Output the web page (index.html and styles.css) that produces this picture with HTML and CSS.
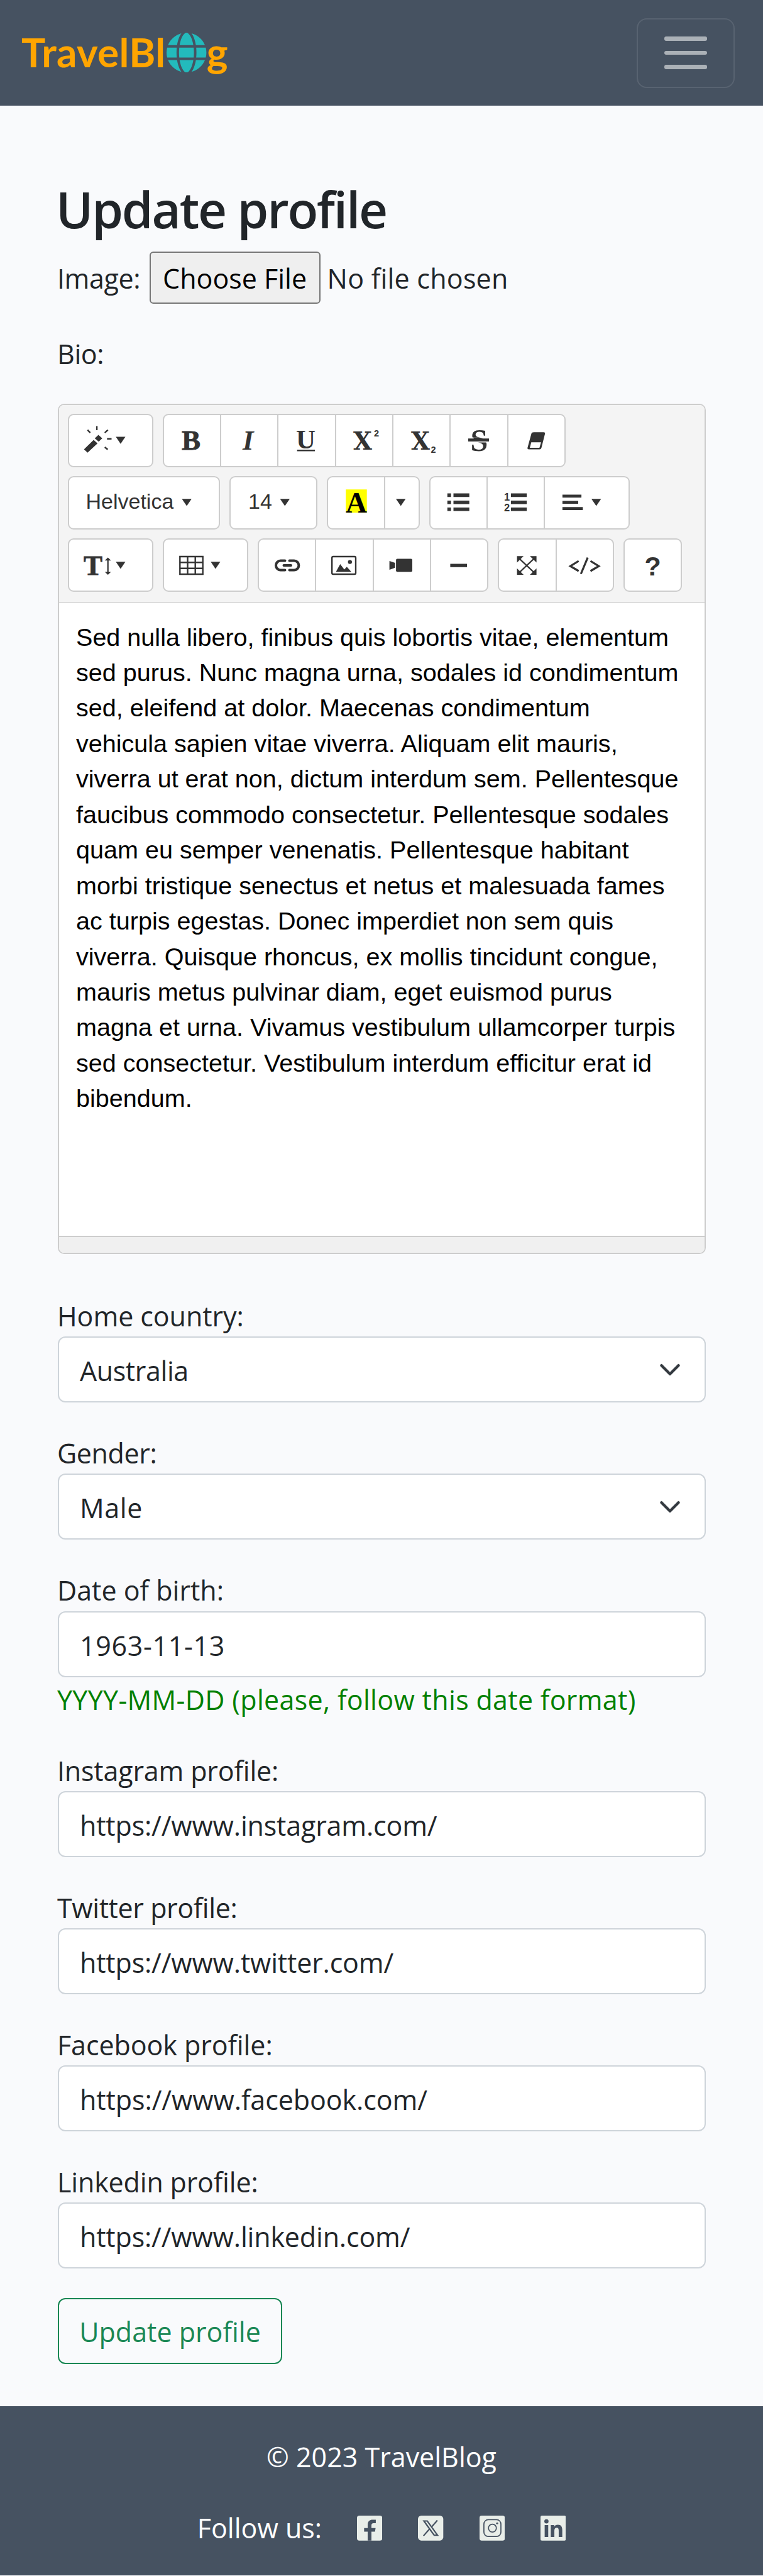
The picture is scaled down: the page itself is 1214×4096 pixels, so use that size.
FILE: index.html
```html
<!DOCTYPE html>
<html lang="en">
<head>
<meta charset="utf-8">
<title>Update profile</title>
<link rel="stylesheet" href="styles.css">
</head>
<body>
<header class="navbar">
  <a class="brand"><span>TravelBl</span><svg class="globe" viewBox="0 0 512 512"><path d="M352 256c0 22.200-1.200 43.600-3.300 64H163.300c-2.200-20.400-3.300-41.800-3.300-64s1.200-43.600 3.300-64H348.700c2.200 20.400 3.300 41.800 3.300 64zm28.800-64H503.900c5.300 20.500 8.100 41.900 8.100 64s-2.800 43.500-8.100 64H380.800c2.100-20.600 3.200-42 3.200-64s-1.100-43.400-3.200-64zm112.600-32H376.700c-10-63.900-29.800-117.400-55.300-151.600c78.300 20.700 142 77.500 171.900 151.600zm-149.100 0H167.700c6.100-36.400 15.500-68.600 27-94.700c10.500-23.600 22.200-40.700 33.500-51.500C239.400 3.200 248.700 0 256 0s16.600 3.200 27.800 13.800c11.300 10.800 23 27.900 33.500 51.500c11.600 26 20.900 58.200 27 94.700zm-209 0H18.600C48.600 85.900 112.200 29.100 190.600 8.400C165.100 42.600 145.300 96.100 135.300 160zM8.100 192H131.200c-2.100 20.600-3.200 42-3.200 64s1.100 43.400 3.200 64H8.100C2.800 299.500 0 278.100 0 256s2.800-43.500 8.100-64zM194.700 446.600c-11.600-26-20.900-58.200-27-94.600H344.300c-6.100 36.400-15.500 68.600-27 94.600c-10.500 23.600-22.200 40.700-33.500 51.500C272.600 508.800 263.300 512 256 512s-16.600-3.200-27.800-13.800c-11.300-10.800-23-27.900-33.500-51.500zM135.300 352c10 63.900 29.800 117.400 55.300 151.600C112.200 482.900 48.600 426.100 18.600 352H135.300zm358.100 0c-30 74.100-93.600 130.900-171.900 151.600c25.500-34.200 45.200-87.700 55.300-151.600H493.400z"/></svg><span>g</span></a>
  <button class="toggler" type="button" aria-label="Menu"><i></i><i></i><i></i></button>
</header>

<main class="page">
  <h1 class="title">Update profile</h1>
  <div class="file-row">
    <span class="tight4">Image:</span>
    <button class="file-button" type="button">Choose File</button>
    <span class="loose2">No file chosen</span>
  </div>
  <div class="label bio-label tight4">Bio:</div>

  <section class="editor">
    <div class="toolbar">
      <div class="tools">
        <div class="group">
          <button class="btn w136"><svg viewBox="0 0 136 84"><path d="M25.600 56.500L31.300 61.800L47.200 47.100L41 41.400zM42.800 38.900L48.600 33.600L54.700 38.900L49 44.200z"/><path class="line" d="M46.100 19.400V26M31.300 25.700l4.300 4.400M63.700 25.700l-5 4.400M62.300 39.800h7.200M58.700 53l4.700 3.800"/><path d="M76.300 36.500h15.200L83.900 47.700z"/></svg></button>
        </div>
        <div class="group">
          <button class="btn w93"><svg viewBox="0 0 93 84"><text class="serif heavy" x="30" y="57">B</text></svg></button>
          <button class="btn w93"><svg viewBox="0 0 93 84"><text class="serif italic" x="36" y="57">I</text></svg></button>
          <button class="btn w93"><svg viewBox="0 0 93 84"><text class="serif" x="30" y="55" font-size="43">U</text><path d="M31.700 57h28.400v2.600H31.700z"/></svg></button>
          <button class="btn w93"><svg viewBox="0 0 93 84"><text class="slab" x="29" y="57">X</text><text class="tiny" x="62" y="36.400">2</text></svg></button>
          <button class="btn w93"><svg viewBox="0 0 93 84"><text class="slab" x="30" y="57">X</text><text class="tiny" x="61.500" y="61.800">2</text></svg></button>
          <button class="btn w93"><svg viewBox="0 0 93 84"><text class="serif" x="33.500" y="58.500" font-size="50">S</text><path fill="#fff" d="M29 37.500h35v8H29z"/><path d="M38 37.500h9l14 4H40zM29.900 39.300H63v4.600H29.900z"/></svg></button>
          <button class="btn w93"><svg viewBox="0 0 93 84"><path fill-rule="evenodd" d="M42.500 29.200H58q2.800 0 2.100 2.600L54.500 54q-.6 2.500-3.200 2.500H34.500q-2.800 0-2.100-2.700L38.500 31.500q.7-2.300 4-2.300zM38.300 45.200L36 53.900H51.300L53.900 45.200z"/></svg></button>
        </div>
      </div>
      <div class="tools">
        <div class="group">
          <button class="btn w242"><svg viewBox="0 0 242 84"><text class="sans" x="28.500" y="52">Helvetica</text><path d="M181.400 36.200h15.400L189.100 47.600z"/></svg></button>
        </div>
        <div class="group">
          <button class="btn w140"><svg viewBox="0 0 140 84"><text class="sans" x="30" y="52">14</text><path d="M80.600 36.200H96L88.300 47.600z"/></svg></button>
        </div>
        <div class="group">
          <button class="btn w93"><svg viewBox="0 0 93 84"><path fill="#ff0" d="M30.200 21.300h33.500v37H30.200z"/><text class="serif black" x="30" y="57.700" font-size="47">A</text></svg></button>
          <button class="btn w56"><svg viewBox="0 0 56 84"><path d="M19 36.200h15.400L26.700 47.600z"/></svg></button>
        </div>
        <div class="group">
          <button class="btn w93"><svg viewBox="0 0 93 84"><path d="M28.800 27.600h5.800v5.600h-5.800zM28.800 38.900h5.800v5.600h-5.800zM28.800 50h5.800v5.600h-5.800zM38.500 27.600h25.200v5.600H38.500zM38.500 38.900h25.200v5.600H38.500zM38.500 50h25.200v5.600H38.500z"/></svg></button>
          <button class="btn w93"><svg viewBox="0 0 93 84"><text class="num" x="28" y="38.900">1</text><text class="num" x="28" y="55.800">2</text><path d="M38.900 27.600h25.200v5.600H38.900zM38.900 38.900h25.200v5.600H38.900zM38.900 50h25.200v5.600H38.900z"/></svg></button>
          <button class="btn w136"><svg viewBox="0 0 136 84"><path d="M29.900 29.500h30.200v4.700H29.900zM29.900 39.500H55V44H29.900zM29.900 49.300h32.400V54H29.900zM76 36.200h15.400L83.700 47.600z"/></svg></button>
        </div>
      </div>
      <div class="tools">
        <div class="group">
          <button class="btn w136"><svg viewBox="0 0 136 84"><text class="serif heavy" x="25" y="58" font-size="45">T</text><path d="M63.700 30.500l5 4.700h-3.900v18h3.900l-5 4.700l-5-4.700h3.900v-18h-3.900zM76.300 37.200h15.200L83.900 48.400z"/></svg></button>
        </div>
        <div class="group">
          <button class="btn w136"><svg viewBox="0 0 136 84"><path class="line" d="M27.300 29h36.400v28H27.300zM39.500 29v28M51.700 29v28M27.300 38.300h36.400M27.300 47.700h36.400"/><path d="M76.300 37.200h15.200L83.900 48.400z"/></svg></button>
        </div>
        <div class="group">
          <button class="btn w93"><svg viewBox="0 0 93 84"><path class="thick" d="M43.500 35.600h-7.100a7.400 7.400 0 0 0 0 14.800h7.100M50.500 35.600h7.500a7.400 7.400 0 0 1 0 14.800h-7.500M41.500 43h11.500"/></svg></button>
          <button class="btn w93"><svg viewBox="0 0 93 84"><rect class="line" x="27.200" y="29" width="37.800" height="28" rx="2"/><circle cx="55.800" cy="37.600" r="3.200"/><path d="M33.500 53.300L40.300 41.100L46.800 49.600L50.800 45.200L58 53.300z"/></svg></button>
          <button class="btn w93"><svg viewBox="0 0 93 84"><rect x="37.100" y="32.600" width="25.900" height="20.700" rx="2"/><path d="M26.600 36.100L35.600 39v7.700l-9 3.200z"/></svg></button>
          <button class="btn w93"><svg viewBox="0 0 93 84"><path d="M32.400 40.500H59v5.300H32.400z"/></svg></button>
        </div>
        <div class="group">
          <button class="btn w93"><svg viewBox="0 0 93 84"><path class="line" d="M33 31l26 24.500M59 31L33 55.500"/><path d="M30.600 28.200h10.500L30.600 38.500zM61.600 28.200H51.100l10.500 10.300zM30.600 58h10.500L30.600 47.700zM61.600 58H51.100l10.500-10.300z"/></svg></button>
          <button class="btn w93"><svg viewBox="0 0 93 84"><path class="line code" d="M36.700 36L23.500 44.200l13.200 7.800M51.100 30.700L40.300 56.500M55.500 36l13.200 8.200L55.500 52"/></svg></button>
        </div>
        <div class="group">
          <button class="btn w93"><svg viewBox="0 0 93 84"><text class="sans bold" x="33.500" y="58.500" font-size="43">?</text></svg></button>
        </div>
      </div>
    </div>
    <div class="editable">Sed nulla libero, finibus quis lobortis vitae, elementum<br>sed purus. Nunc magna urna, sodales id condimentum<br>sed, eleifend at dolor. Maecenas condimentum<br>vehicula sapien vitae viverra. Aliquam elit mauris,<br>viverra ut erat non, dictum interdum sem. Pellentesque<br>faucibus commodo consectetur. Pellentesque sodales<br>quam eu semper venenatis. Pellentesque habitant<br>morbi tristique senectus et netus et malesuada fames<br>ac turpis egestas. Donec imperdiet non sem quis<br>viverra. Quisque rhoncus, ex mollis tincidunt congue,<br>mauris metus pulvinar diam, eget euismod purus<br>magna et urna. Vivamus vestibulum ullamcorper turpis<br>sed consectetur. Vestibulum interdum efficitur erat id<br>bibendum.</div>
    <div class="statusbar"></div>
  </section>

  <div class="field">
    <div class="label tight1">Home country:</div>
    <div class="control"><span class="tight4">Australia</span><svg class="chevron" viewBox="0 0 16 16"><path d="m2 5 6 6 6-6"/></svg></div>
  </div>
  <div class="field">
    <div class="label tight4">Gender:</div>
    <div class="control"><span class="loose6">Male</span><svg class="chevron" viewBox="0 0 16 16"><path d="m2 5 6 6 6-6"/></svg></div>
  </div>
  <div class="field">
    <div class="label">Date of birth:</div>
    <div class="control"><span class="loose6">1963-11-13</span></div>
    <div class="help">YYYY-MM-DD (please, follow this date format)</div>
  </div>
  <div class="field">
    <div class="label tight2">Instagram profile:</div>
    <div class="control"><span class="tight2">https://www.instagram.com/</span></div>
  </div>
  <div class="field">
    <div class="label tight4">Twitter profile:</div>
    <div class="control"><span class="tight2">https://www.twitter.com/</span></div>
  </div>
  <div class="field">
    <div class="label tight1">Facebook profile:</div>
    <div class="control"><span class="tight1">https://www.facebook.com/</span></div>
  </div>
  <div class="field">
    <div class="label tight2">Linkedin profile:</div>
    <div class="control"><span class="tight2">https://www.linkedin.com/</span></div>
  </div>
  <button class="submit" type="submit">Update profile</button>
</main>

<footer class="footer">
  <div class="copy">© 2023 TravelBlog</div>
  <div class="follow"><span>Follow us:</span>
    <div class="social">
      <svg viewBox="0 0 128 126"><rect class="tile" width="128" height="126" rx="12"/><path class="cut" d="M54 126V81H36V63H54V49c0-20 9-28 26-28h15v17H84c-8 0-11 4-11 11v14h21l-3 18H73v45z"/></svg>
      <svg viewBox="0 0 128 126"><rect class="tile" width="128" height="126" rx="17"/><path class="stroke x" d="M98 24L69 57M28 102L60 66"/><path class="stroke x tile" d="M30 27H47L99 99H82z"/></svg>
      <svg viewBox="0 0 128 126"><rect class="tile" width="128" height="126" rx="11"/><rect class="stroke" x="22" y="20.500" width="86" height="85" rx="22"/><circle class="stroke" cx="65" cy="63" r="20"/><circle class="cut" cx="89" cy="39" r="5"/></svg>
      <svg viewBox="0 0 128 126"><rect class="tile" width="128" height="126" rx="7"/><circle class="cut" cx="30" cy="29" r="10.500"/><path class="cut" d="M21 48h18v60H21zM52 48h17v8c4-7 10-10 19-10 16 0 22 10 22 27v35H92V76c0-9-2-15-10-15s-12 6-12 15v32H52z"/></svg>
    </div>
  </div>
</footer>
</body>
</html>
```
FILE: styles.css
```css
* { box-sizing: border-box; }
body { margin: 0; background: #f9fafc; color: #212529; font: 43px/66px "Open Sans", sans-serif; }
button { font: inherit; margin: 0; padding: 0; }
.tight1 { letter-spacing: -.08px; }
.tight2 { letter-spacing: -.17px; }
.tight4 { letter-spacing: -.4px; }
.loose2 { letter-spacing: .23px; }
.loose6 { letter-spacing: .65px; }

.navbar { height: 168px; background: #465261; display: flex; justify-content: space-between; align-items: center; padding: 0 45px 0 34px; }
.brand { display: flex; align-items: center; font: 700 64px/78px Lato, sans-serif; letter-spacing: .3px; color: #ffa500; margin-top: -3px; }
.globe { width: 63.400px; height: 63.400px; margin: 2px 0 0 2px; fill: #23babc; }
.toggler { width: 156px; height: 111px; border: 2px solid rgba(255,255,255,.1); border-radius: 16px; background: none; display: flex; flex-direction: column; align-items: center; justify-content: center; gap: 16px; }
.toggler i { width: 68px; height: 6.500px; border-radius: 3px; background: rgba(255,255,255,.55); }

.page { padding: 113px 91px 0 92px; }
.title { margin: 0 0 18px -3px; padding-top: 1px; font-size: 80px; line-height: 100px; font-weight: 600; letter-spacing: -2.200px; white-space: nowrap; }
.file-row { display: flex; align-items: center; height: 83px; margin-left: -1px; white-space: nowrap; }
.file-row span { padding-top: 2px; }
.file-button { height: 83px; width: 272px; border: 2px solid #767676; border-radius: 6px; background: #efefef; color: #000; margin: 0 11px 0 14.500px; padding-top: 2px; }
.label { height: 66.600px; padding-top: 1.400px; margin-left: -1px; white-space: nowrap; }
.bio-label { margin: 46px 0 46px -1px; }

.editor { height: 1352px; border: 2px solid #cdcdcd; border-radius: 10px; overflow: hidden; background: #fff; display: flex; flex-direction: column; }
.toolbar { height: 315px; background: #f4f4f4; border-bottom: 2px solid #ddd; padding: 14px 0 0 13.500px; display: flex; flex-direction: column; gap: 14px; }
.tools { display: flex; gap: 15px; height: 85px; }
.group { display: flex; }
.btn { height: 85px; border: 2px solid #cdcdcd; background: #fff; margin-left: -2px; color: #333; }
.btn:first-child { margin-left: 0; border-radius: 9px 0 0 9px; }
.btn:last-child { border-radius: 0 9px 9px 0; }
.btn:only-child { border-radius: 9px; }
.btn svg { display: block; height: 84px; margin: -2px; fill: #333; }
.w93 { width: 93.300px; }
.w93 svg { width: 93px; }
.w136 { width: 136.300px; }
.w136 svg { width: 136px; }
.w242 { width: 242px; }
.w242 svg { width: 242px; }
.w140 { width: 140.500px; }
.w140 svg { width: 140px; }
.w56 { width: 56.500px; }
.w56 svg { width: 56px; }
.serif { font-family: "Liberation Serif", serif; font-weight: 700; }
text.serif:not([font-size]) { font-size: 45px; }
.heavy { stroke: #333; stroke-width: .8px; }
.italic { font-style: italic; }
.black { fill: #000; }
.slab { font: 700 38.500px "DejaVu Serif", serif; }
.tiny { font: 700 14.500px "Liberation Sans", sans-serif; }
.num { font: 700 16.500px "Liberation Sans", sans-serif; }
.sans { font-family: "Liberation Sans", sans-serif; }
text.sans:not([font-size]) { font-size: 34px; }
.bold { font-weight: 700; }
.line { fill: none; stroke: #333; stroke-width: 2.400px; }
.code { stroke-width: 3.200px; }
.thick { fill: none; stroke: #333; stroke-width: 4px; stroke-linecap: round; }
.editable { flex: 1; font: 39.550px/56.430px "Liberation Sans", sans-serif; color: #000; padding: 26px 0 0 27px; white-space: nowrap; }
.statusbar { height: 27px; background: #f0f0f0; border-top: 2px solid #cdcdcd; }

.field { margin-bottom: 46.600px; }
.editor + .field { margin-top: 65px; }
.control { height: 105px; border: 2px solid #ced4da; border-radius: 12px; background: #fff; padding: 5px 37px 0 33px; display: flex; align-items: center; justify-content: space-between; }
.chevron { width: 36px; height: 36px; margin-top: -5px; fill: none; stroke: #343a40; stroke-width: 2px; stroke-linecap: round; stroke-linejoin: round; }
.help { color: #008000; padding-top: 3px; height: 68px; letter-spacing: .32px; margin-left: -1px; white-space: nowrap; }
.submit { width: 357px; height: 105px; border: 2px solid #198754; border-radius: 12px; color: #198754; background: none; display: block; padding-top: 3px; }

.footer { background: #465261; color: #fff; margin-top: 67px; height: 269px; padding-top: 48px; text-align: center; }
.follow { display: flex; justify-content: center; align-items: center; gap: 56px; margin-top: 47px; }
.social { display: flex; gap: 57px; }
.social svg { width: 40.300px; height: 39.700px; }
.tile { fill: #e9eee9; }
.cut { fill: #465261; }
.stroke { stroke: #465261; stroke-width: 5.500px; }
rect.stroke, circle.stroke { fill: none; }
.x { stroke-width: 7px; }
```
